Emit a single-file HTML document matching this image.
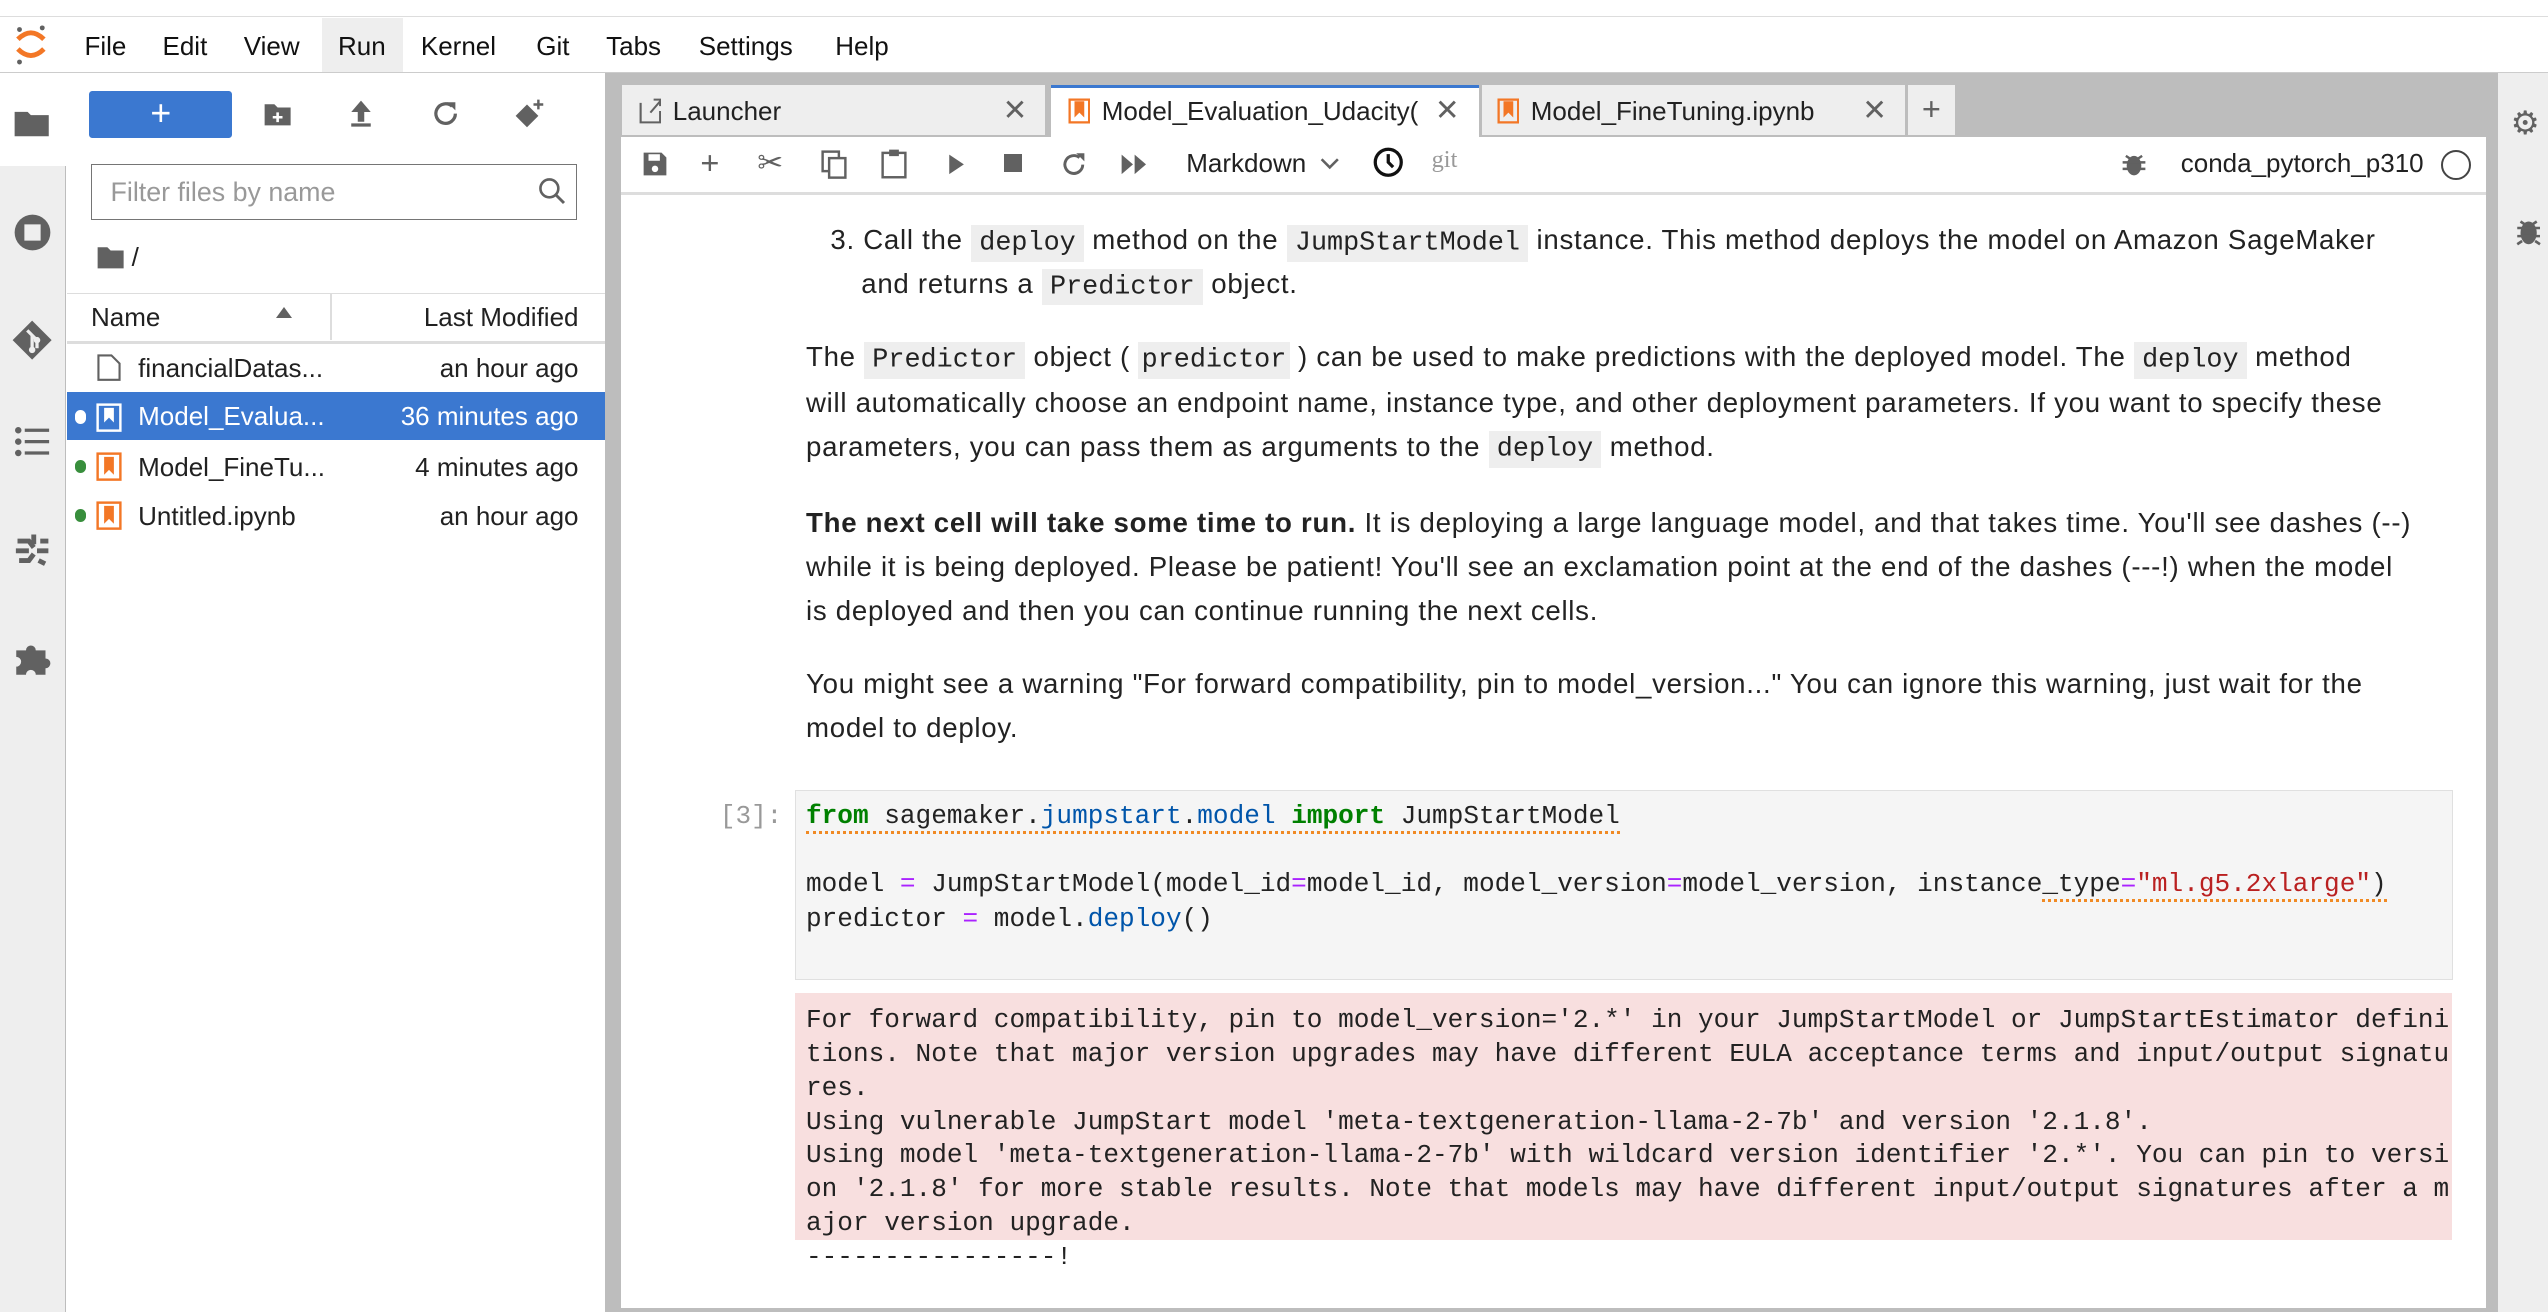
<!DOCTYPE html>
<html><head><meta charset="utf-8"><style>
html,body{margin:0;padding:0;background:#fff;overflow:hidden;width:2548px;height:1312px}
#w{zoom:1.625;width:1568px;height:808px;position:relative;font-family:"Liberation Sans",sans-serif;color:#212121}
.a{position:absolute;white-space:nowrap}
.m{font-family:"Liberation Mono",monospace}
.menu span{position:absolute;top:19px;font-size:16px;color:#111}
code{font-family:"Liberation Mono",monospace;background:#eee;padding:2px 5px;font-size:16.5px;color:#222;letter-spacing:0}
.p{position:absolute;left:496px;font-size:17px;letter-spacing:0.45px;white-space:nowrap;color:#222}
.o{position:absolute;left:496px;font-family:"Liberation Mono",monospace;font-size:16.05px;white-space:nowrap;color:#222}
.ic{position:absolute}
</style></head><body><div id="w">
<div class="a" style="left:0;top:0;width:1568px;height:10px;background:#fff;border-bottom:1px solid #ddd"></div>
<div class="menu">
<svg class="ic" style="left:8px;top:14px" width="22" height="26" viewBox="0 0 22 26"><path d="M3 10 Q11 2 19 10" stroke="#f37726" stroke-width="3" fill="none"/><path d="M3 16 Q11 24 19 16" stroke="#f37726" stroke-width="3" fill="none"/><circle cx="4" cy="4" r="1.5" fill="#616161"/><circle cx="18" cy="3" r="1.5" fill="#616161"/><circle cx="4" cy="24" r="1.5" fill="#616161"/></svg>
<div class="a" style="left:198px;top:11px;width:50px;height:34px;background:#eee"></div>
<span style="left:52px">File</span><span style="left:100px">Edit</span><span style="left:150px">View</span><span style="left:208px">Run</span><span style="left:259px">Kernel</span><span style="left:330px">Git</span><span style="left:373px">Tabs</span><span style="left:430px">Settings</span><span style="left:514px">Help</span>
</div>
<div class="a" style="left:0;top:44px;width:1568px;height:1px;background:#ccc"></div>
<div class="a" style="left:0;top:45px;width:40px;height:763px;background:#eee;border-right:1px solid #bdbdbd"></div>
<div class="a" style="left:0;top:45px;width:41px;height:57px;background:#fff"></div>
<svg class="ic" style="left:8px;top:66px" width="24" height="20"><path d="M1 3h8l2 2h11v13H1z" fill="#616161"/></svg>
<svg class="ic" style="left:8px;top:131px" width="24" height="24"><circle cx="12" cy="12" r="11" fill="#616161"/><rect x="7" y="7" width="10" height="10" fill="#eee"/></svg>
<svg class="ic" style="left:7px;top:196px" width="26" height="26"><path d="M13 1L25 13 13 25 1 13z" fill="#616161"/><path d="M10 7l6 6v5M13 10v9" stroke="#eee" stroke-width="2" fill="none"/><circle cx="13" cy="19" r="2" fill="#eee"/><circle cx="16" cy="13" r="2" fill="#eee"/></svg>
<svg class="ic" style="left:9px;top:263px" width="22" height="18"><g fill="#616161"><circle cx="2" cy="2" r="2"/><circle cx="2" cy="9" r="2"/><circle cx="2" cy="16" r="2"/><rect x="6" y="1" width="15" height="2"/><rect x="6" y="8" width="15" height="2"/><rect x="6" y="15" width="15" height="2"/></g></svg>
<svg class="ic" style="left:7px;top:325px" width="26" height="26"><g stroke="#616161" stroke-width="3" fill="none"><path d="M4 8h7l3 4M3 14h8M5 20h6l3-4M14 4v6M18 8h5M16 14h7M17 20l4 2"/></g></svg>
<svg class="ic" style="left:8px;top:393px" width="24" height="24"><path d="M2 7h6a3 3 0 1 1 6 0h6v5a3 3 0 1 1 0 6v4h-6a3 3 0 1 0-6 0H2v-5a3 3 0 1 0 0-6z" fill="#616161"/></svg>
<div class="a" style="left:55px;top:56px;width:88px;height:29px;background:#3b78d0;border-radius:2px;color:#fff;font-size:22px;text-align:center;line-height:28px">+</div>
<svg class="ic" style="left:162px;top:62px" width="18" height="16"><path d="M1 2h6l2 2h8v11H1z" fill="#616161"/><path d="M9 7v6M6 10h6" stroke="#fff" stroke-width="1.6"/></svg>
<svg class="ic" style="left:214px;top:61px" width="16" height="18"><path d="M8 1l6 7h-4v6H6V8H2z" fill="#616161"/><rect x="2" y="15" width="12" height="2" fill="#616161"/></svg>
<svg class="ic" style="left:265px;top:61px" width="18" height="18"><path d="M15 9a6 6 0 1 1-2-4.5" stroke="#616161" stroke-width="2" fill="none"/><path d="M10 2h5v5z" fill="#616161"/></svg>
<svg class="ic" style="left:316px;top:60px" width="20" height="20"><path d="M8 4L15 11 8 18 1 11z" fill="#616161"/><path d="M15 1v6M12 4h6" stroke="#616161" stroke-width="1.5"/></svg>
<div class="a" style="left:56px;top:101px;width:298px;height:33px;border:1px solid #757575"></div>
<div class="a" style="left:68px;top:109px;font-size:16.5px;color:#999">Filter files by name</div>
<svg class="ic" style="left:331px;top:109px" width="18" height="18"><circle cx="7" cy="7" r="5.5" stroke="#616161" stroke-width="1.6" fill="none"/><path d="M11 11l5 5" stroke="#616161" stroke-width="1.8"/></svg>
<svg class="ic" style="left:59px;top:150px" width="18" height="16"><path d="M1 2h6l2 2h8v11H1z" fill="#616161"/></svg>
<div class="a" style="left:81px;top:149px;font-size:16px">/</div>
<div class="a" style="left:41px;top:180px;width:331px;height:29px;border-top:1px solid #ddd;border-bottom:2px solid #ddd"></div>
<div class="a" style="left:203px;top:181px;width:1px;height:28px;background:#ddd"></div>
<div class="a" style="left:56px;top:186px;font-size:16px">Name</div>
<div class="a" style="left:170px;top:189px;width:0;height:0;border-left:5px solid transparent;border-right:5px solid transparent;border-bottom:7px solid #616161"></div>
<div class="a" style="right:1212px;top:186px;font-size:16px">Last Modified</div>
<div class="a" style="left:41px;top:241px;width:331px;height:30px;background:#3b78d0"></div>
<svg class="ic" style="left:59px;top:217px" width="16" height="18"><path d="M1.5 1.5h8l5 5v10h-13z" stroke="#616161" stroke-width="1.3" fill="none"/></svg>
<div class="a" style="left:85px;top:217px;font-size:16px">financialDatas...</div><div class="a" style="right:1212px;top:217px;font-size:16px">an hour ago</div>
<div class="a" style="left:46px;top:252px;width:7px;height:9px;border-radius:4px;background:#fff"></div>
<svg class="ic" style="left:59px;top:248px" width="16" height="18"><rect x="1" y="1" width="14" height="16" fill="none" stroke="#fff" stroke-width="1.5"/><path d="M5 3v9l3-3 3 3V3" fill="#fff"/></svg>
<div class="a" style="left:85px;top:247px;font-size:16px;color:#fff">Model_Evalua...</div><div class="a" style="right:1212px;top:247px;font-size:16px;color:#fff">36 minutes ago</div>
<div class="a" style="left:46px;top:283px;width:7px;height:8px;border-radius:4px;background:#388e3c"></div>
<svg class="ic" style="left:59px;top:278px" width="16" height="18"><rect x="1" y="1" width="14" height="16" fill="none" stroke="#f37726" stroke-width="1.5"/><path d="M5 3v11l3-3 3 3V3z" fill="#f37726"/></svg>
<div class="a" style="left:85px;top:278px;font-size:16px">Model_FineTu...</div><div class="a" style="right:1212px;top:278px;font-size:16px">4 minutes ago</div>
<div class="a" style="left:46px;top:313px;width:7px;height:8px;border-radius:4px;background:#388e3c"></div>
<svg class="ic" style="left:59px;top:308px" width="16" height="18"><rect x="1" y="1" width="14" height="16" fill="none" stroke="#f37726" stroke-width="1.5"/><path d="M5 3v11l3-3 3 3V3z" fill="#f37726"/></svg>
<div class="a" style="left:85px;top:308px;font-size:16px">Untitled.ipynb</div><div class="a" style="right:1212px;top:308px;font-size:16px">an hour ago</div>
<div class="a" style="left:372px;top:45px;width:1165px;height:763px;background:#bdbdbd"></div>
<div class="a" style="left:1537px;top:45px;width:31px;height:763px;background:#eee"></div>
<div class="a ic" style="left:1545px;top:64px;font-size:20px;color:#616161">⚙</div>
<svg class="ic" style="left:1547px;top:132px" width="18" height="20"><ellipse cx="9" cy="11" rx="5" ry="7" fill="#616161"/><path d="M2 8h14M2 13h14M4 4l3 2M14 4l-3 2M2 18l3-2M16 18l-3-2" stroke="#616161" stroke-width="1.6"/></svg>
<div class="a" style="left:383px;top:52px;width:260px;height:31px;background:#eee;border-bottom:1px solid #bdbdbd"></div>
<svg class="ic" style="left:393px;top:60px" width="14" height="16"><path d="M1 3v12h12V8M7 9l6-7M9 1h4v4" stroke="#616161" stroke-width="1.3" fill="none"/></svg>
<div class="a" style="left:414px;top:59px;font-size:16px">Launcher</div>
<div class="a" style="left:617px;top:57px;font-size:18px;color:#616161">✕</div>
<div class="a" style="left:647px;top:52px;width:263px;height:32px;background:#fff;border-top:2px solid #3b78d0;box-sizing:border-box"></div>
<svg class="ic" style="left:657px;top:60px" width="14" height="16"><rect x="1" y="1" width="12" height="14" fill="none" stroke="#f37726" stroke-width="1.4"/><path d="M4 2v10l3-3 3 3V2z" fill="#f37726"/></svg>
<div class="a" style="left:678px;top:59px;font-size:16px;width:202px;overflow:hidden">Model_Evaluation_Udacity(</div>
<div class="a" style="left:883px;top:57px;font-size:18px;color:#616161">✕</div>
<div class="a" style="left:912px;top:52px;width:260px;height:31px;background:#eee"></div>
<svg class="ic" style="left:921px;top:60px" width="14" height="16"><rect x="1" y="1" width="12" height="14" fill="none" stroke="#f37726" stroke-width="1.4"/><path d="M4 2v10l3-3 3 3V2z" fill="#f37726"/></svg>
<div class="a" style="left:942px;top:59px;font-size:16px">Model_FineTuning.ipynb</div>
<div class="a" style="left:1146px;top:57px;font-size:18px;color:#616161">✕</div>
<div class="a" style="left:1174px;top:52px;width:29px;height:31px;background:#eee;font-size:20px;text-align:center;line-height:30px;color:#616161">+</div>
<div class="a" style="left:382px;top:84px;width:1148px;height:34px;background:#fff;border-bottom:2px solid #ddd"></div>
<svg class="ic" style="left:395px;top:93px" width="16" height="16"><path d="M1 1h11l3 3v11H1z" fill="#616161"/><rect x="4" y="2" width="7" height="4" fill="#fff"/><circle cx="8" cy="11" r="2" fill="#fff"/></svg>
<div class="a" style="left:431px;top:89px;font-size:20px;color:#616161">+</div>
<div class="a" style="left:466px;top:89px;font-size:19px;color:#616161">✂</div>
<svg class="ic" style="left:505px;top:92px" width="16" height="18"><rect x="1" y="1" width="10" height="12" fill="none" stroke="#616161" stroke-width="1.5"/><rect x="5" y="5" width="10" height="12" fill="#fff" stroke="#616161" stroke-width="1.5"/></svg>
<svg class="ic" style="left:542px;top:91px" width="16" height="19"><rect x="1" y="3" width="14" height="15" fill="none" stroke="#616161" stroke-width="1.5"/><rect x="5" y="1" width="6" height="4" fill="#616161"/></svg>
<svg class="ic" style="left:582px;top:94px" width="12" height="14"><path d="M2 1l9 6-9 6z" fill="#616161"/></svg>
<div class="a" style="left:618px;top:95px;width:11px;height:11px;background:#616161"></div>
<svg class="ic" style="left:652px;top:92px" width="18" height="18"><path d="M14 9a5.5 5.5 0 1 1-2-4.3" stroke="#616161" stroke-width="1.8" fill="none"/><path d="M10 2h5v5z" fill="#616161"/></svg>
<svg class="ic" style="left:689px;top:94px" width="18" height="14"><path d="M1 1l7 6-7 6zM9 1l7 6-7 6z" fill="#616161"/></svg>
<div class="a" style="left:730px;top:91px;font-size:16px">Markdown</div>
<svg class="ic" style="left:812px;top:96px" width="12" height="10"><path d="M1 2l5 5 5-5" stroke="#616161" stroke-width="1.6" fill="none"/></svg>
<svg class="ic" style="left:844px;top:90px" width="20" height="20"><circle cx="10" cy="10" r="8" stroke="#111" stroke-width="2" fill="none"/><path d="M10 5v5l3 3" stroke="#111" stroke-width="2" fill="none"/></svg>
<div class="a" style="left:881px;top:90px;font-size:15px;color:#999;font-family:'Liberation Serif',serif">git</div>
<svg class="ic" style="left:1305px;top:93px" width="16" height="17"><ellipse cx="8" cy="9" rx="4.5" ry="6" fill="#616161"/><path d="M1 7h14M1 11h14M3 3l3 2M13 3l-3 2" stroke="#616161" stroke-width="1.5"/></svg>
<div class="a" style="left:1342px;top:91px;font-size:16px">conda_pytorch_p310</div>
<div class="a" style="left:1502px;top:92px;width:16px;height:16px;border:1.5px solid #444;border-radius:50%"></div>
<div class="a" style="left:382px;top:120px;width:1148px;height:688px;background:#fff"></div>
<div class="p" style="left:511px;top:138px">3. Call the <code>deploy</code> method on the <code>JumpStartModel</code> instance. This method deploys the model on Amazon SageMaker</div>
<div class="p" style="left:530px;top:165px">and returns a <code>Predictor</code> object.</div>
<div class="p" style="top:210px">The <code>Predictor</code> object ( <code style="padding:2px 2px">predictor</code> ) can be used to make predictions with the deployed model. The <code>deploy</code> method</div>
<div class="p" style="top:238px">will automatically choose an endpoint name, instance type, and other deployment parameters. If you want to specify these</div>
<div class="p" style="top:265px">parameters, you can pass them as arguments to the <code>deploy</code> method.</div>
<div class="p" style="top:312px"><b>The next cell will take some time to run.</b> It is deploying a large language model, and that takes time. You'll see dashes (--)</div>
<div class="p" style="top:339px">while it is being deployed. Please be patient! You'll see an exclamation point at the end of the dashes (---!) when the model</div>
<div class="p" style="top:366px">is deployed and then you can continue running the next cells.</div>
<div class="p" style="top:411px">You might see a warning "For forward compatibility, pin to model_version..." You can ignore this warning, just wait for the</div>
<div class="p" style="top:438px">model to deploy.</div>
<div class="a m" style="left:443px;top:493px;font-size:16px;color:#999">[3]:</div>
<div class="a" style="left:489px;top:486px;width:1019px;height:116px;background:#f5f5f5;border:1px solid #e0e0e0"></div>
<div class="o" style="top:493px"><span style="border-bottom:2px dotted #f08a24"><b style="color:#008000;font-weight:bold">from</b> sagemaker.<span style="color:#0055aa">jumpstart</span>.<span style="color:#0055aa">model</span> <b style="color:#008000">import</b> JumpStartModel</span></div>
<div class="o" style="top:535px">model <span style="color:#aa22ff">=</span> JumpStartModel(model_id<span style="color:#aa22ff">=</span>model_id, model_version<span style="color:#aa22ff">=</span>model_version, instance<span style="border-bottom:2px dotted #f08a24">_type<span style="color:#aa22ff">=</span><span style="color:#ba2121">"ml.g5.2xlarge"</span>)</span></div>
<div class="o" style="top:556px">predictor <span style="color:#aa22ff">=</span> model.<span style="color:#0055aa">deploy</span>()</div>
<div class="a" style="left:489px;top:611px;width:1020px;height:152px;background:#f8dfdf"></div>
<div class="o" style="top:618px;line-height:20.8px">For forward compatibility, pin to model_version='2.*' in your JumpStartModel or JumpStartEstimator defini<br>tions. Note that major version upgrades may have different EULA acceptance terms and input/output signatu<br>res.<br>Using vulnerable JumpStart model 'meta-textgeneration-llama-2-7b' and version '2.1.8'.<br>Using model 'meta-textgeneration-llama-2-7b' with wildcard version identifier '2.*'. You can pin to versi<br>on '2.1.8' for more stable results. Note that models may have different input/output signatures after a m<br>ajor version upgrade.<br>----------------!</div>
<div class="a" style="left:382px;top:805px;width:1155px;height:3px;background:#bdbdbd"></div>
</div></body></html>
